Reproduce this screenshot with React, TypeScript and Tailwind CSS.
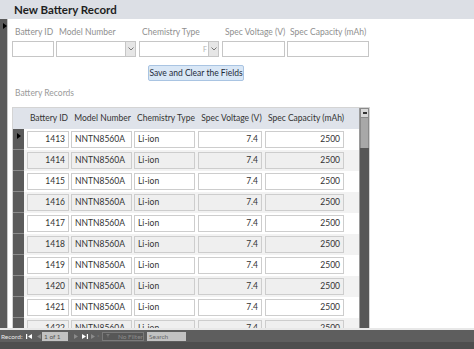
const rows = [1413, 1414, 1415, 1416, 1417, 1418, 1419, 1420, 1421, 1422];

function Field({ label, w, gap, drop, stray }: { label: string; w: string; gap: string; drop?: boolean; stray?: boolean }) {
  return (
    <div className={`flex flex-col ${w} ${gap}`}>
      <div className="h-[13px] pl-[3px] text-[8.5px] leading-[13px] text-[#8f8f8f] whitespace-nowrap">{label}</div>
      <div className="mt-[2px] h-[16px] border border-[#c6c6c6] bg-white flex justify-end items-stretch">
        {stray && <span className="text-[7px] leading-[14px] text-[#b0b0b0] pr-[1px]">F</span>}
        {drop && (
          <div className="w-[10px] bg-[#e6e6e6] border-l border-[#c6c6c6] flex items-center justify-center">
            <svg width="6" height="4" viewBox="0 0 6 4">
              <path d="M0.5 0.5 L3 3 L5.5 0.5" fill="none" stroke="#777" strokeWidth="1" />
            </svg>
          </div>
        )}
      </div>
    </div>
  );
}

function Tri({ dir, color, bar }: { dir: "l" | "r"; color: string; bar?: boolean }) {
  return (
    <svg width="6" height="5" viewBox="0 0 6 5">
      {dir === "l" ? <path d="M6 0 L2 2.5 L6 5 Z" fill={color} /> : <path d="M0 0 L4 2.5 L0 5 Z" fill={color} />}
      {bar && (dir === "l" ? <rect x="0" y="0" width="1.2" height="5" fill={color} /> : <rect x="4.8" y="0" width="1.2" height="5" fill={color} />)}
    </svg>
  );
}

export default function App() {
  return (
    <div className="w-[474px] h-[349px] bg-white overflow-hidden flex flex-col font-['Lato',sans-serif]">
      <div className="h-[19px] shrink-0 bg-[#dcdfe5] pl-[14px] flex items-center">
        <span className="text-[11.5px] font-bold text-[#1e1e1e]">New Battery Record</span>
      </div>

      <div className="h-[309px] shrink-0 flex">
        <div className="w-[8px] bg-[#5b5b5b] border-r border-[#c9c9c9] relative">
          <svg className="absolute left-[3px] top-[4px]" width="4" height="6" viewBox="0 0 4 6">
            <path d="M0 0 L4 3 L0 6 Z" fill="#000" />
          </svg>
        </div>

        <div className="flex-1 flex flex-col pl-[4px] pt-[7px]">
          <div className="flex">
            <Field label="Battery ID" w="w-[42px]" gap="mr-[2px]" />
            <Field label="Model Number" w="w-[80px]" gap="mr-[3px]" drop />
            <Field label="Chemistry Type" w="w-[80px]" gap="mr-[3px]" drop stray />
            <Field label="Spec Voltage (V)" w="w-[63px]" gap="mr-[2px]" />
            <Field label="Spec Capacity (mAh)" w="w-[82px]" gap="" />
          </div>

          <div className="mt-[8px] pl-[136px]">
            <div className="w-[96px] h-[16px] rounded-[2px] border border-[#a9c4e2] bg-[#d9e7f6] text-[8.5px] leading-[14px] text-[#1e2a3a] text-center whitespace-nowrap">
              Save and Clear the Fields
            </div>
          </div>

          <div className="mt-[6px] pl-[3px] h-[12px] text-[8.5px] leading-[12px] text-[#9a9a9a]">Battery Records</div>

          <div className="mt-[8px] w-[358px] flex-1 border-l border-t border-r border-[#d4d4d4] flex overflow-hidden">
            <div className="flex-1 flex flex-col">
              <div className="h-[21px] shrink-0 bg-[#dfe3ea] flex items-center text-[8.5px] text-[#333] whitespace-nowrap">
                <div className="w-[14px]" />
                <div className="w-[44px] text-center">Battery ID</div>
                <div className="w-[63px] text-center">Model Number</div>
                <div className="w-[64px] text-center">Chemistry Type</div>
                <div className="w-[67px] text-center">Spec Voltage (V)</div>
                <div className="w-[82px] text-center">Spec Capacity (mAh)</div>
              </div>
              {rows.map((id, i) => {
                const alt = i % 2 === 1;
                const cell = `h-[17px] border border-[#cdcdcd] ${alt ? "bg-[#efefef]" : "bg-white"} text-[8.5px] leading-[15px] text-[#333] px-[3px] whitespace-nowrap`;
                return (
                  <div key={id} className={`h-[21px] shrink-0 flex items-center ${alt ? "bg-[#f2f2f2]" : "bg-white"}`}>
                    <div className="w-[11px] h-full bg-[#5b5b5b] border-b border-[#8c8c8c] relative">
                      {i === 0 && (
                        <svg className="absolute left-[4px] top-[4px]" width="4" height="6" viewBox="0 0 4 6">
                          <path d="M0 0 L4 3 L0 6 Z" fill="#000" />
                        </svg>
                      )}
                    </div>
                    <div className={`ml-[3px] w-[42px] text-right ${cell}`}>{id}</div>
                    <div className={`ml-[2px] w-[61px] ${cell}`}>NNTN8560A</div>
                    <div className={`ml-[2px] w-[61px] ${cell}`}>Li-ion</div>
                    <div className={`ml-[3px] w-[64px] text-right ${cell}`}>7.4</div>
                    <div className={`ml-[3px] w-[79px] text-right ${cell}`}>2500</div>
                  </div>
                );
              })}
            </div>
            <div className="w-[10px] shrink-0 flex flex-col bg-[#575757] border-l border-[#9a9a9a]">
              <div className="h-[10px] bg-[#d9d9d9] border border-[#8a8a8a] flex items-center justify-center">
                <div className="w-[4px] h-[2px] bg-[#333]" />
              </div>
              <div className="h-[30px] bg-[#a8a8a8] border-x border-[#8a8a8a]" />
            </div>
          </div>
        </div>
      </div>

      <div className="h-[2px] shrink-0 bg-[#e8e8e8]" />

      <div className="h-[12px] shrink-0 bg-[#5e5e5e] flex items-center text-[6.5px] leading-[9px] text-[#e8e8e8] whitespace-nowrap">
        <span className="pl-[1px] w-[26px]">Record:</span>
        <div className="w-[9px] flex items-center"><Tri dir="l" color="#fff" bar /></div>
        <div className="w-[7px] flex items-center"><Tri dir="l" color="#8a8a8a" /></div>
        <div className="w-[26px] h-[9px] bg-[#c2c2c2] text-[#555] pl-[2px]">1 of 1</div>
        <div className="ml-[6px] w-[8px] flex items-center"><Tri dir="r" color="#8a8a8a" /></div>
        <div className="w-[9px] flex items-center"><Tri dir="r" color="#fff" bar /></div>
        <div className="w-[10px] flex items-center text-[6px] text-[#8a8a8a]">
          <Tri dir="r" color="#8a8a8a" />*
        </div>
        <div className="ml-[1px] w-[42px] h-[9px] border border-[#7a7a7a] bg-[#575757] text-[#8c8c8c] flex items-center pl-[3px]">
          <svg width="6" height="6" viewBox="0 0 6 6">
            <path d="M0 0 H6 L3.5 3 V6 L2.5 5 V3 Z" fill="#7a7a7a" />
          </svg>
          <span className="pl-[8px]">No Filter</span>
        </div>
        <div className="ml-[3px] w-[39px] h-[9px] bg-[#c2c2c2] text-[#666] pl-[2px]">Search</div>
      </div>

      <div className="flex-1 bg-[#4e4e4e]" />
    </div>
  );
}
